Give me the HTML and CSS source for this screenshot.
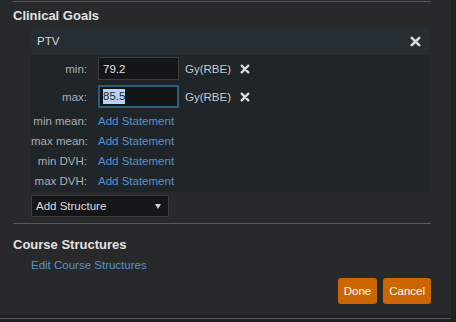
FILE: index.html
```html
<!DOCTYPE html>
<html>
<head>
    <title>Clinical Goals</title>
    <link rel="stylesheet" href="styles.css">
</head>
<body>
    <div class="dialog">
        <div class="rule"></div>
        <h2 class="section-title">Clinical Goals</h2>

        <div class="goal-panel">
            <div class="goal-header">
                <span>PTV</span>
                <svg class="close" width="11" height="11" viewBox="0 0 11 11">
                    <path d="M1.8 1.8 L9.2 9.2 M9.2 1.8 L1.8 9.2" stroke="#d8d8d8" stroke-width="2.6" stroke-linecap="round"/>
                </svg>
            </div>
            <div class="goal-body">
                <div class="input-row">
                    <span class="label">min:</span>
                    <div class="field">79.2</div>
                    <span class="unit">Gy(RBE)</span>
                    <svg class="remove" width="10" height="10" viewBox="0 0 10 10">
                        <path d="M1.7 1.7 L8.3 8.3 M8.3 1.7 L1.7 8.3" stroke="#d8d8d8" stroke-width="2.4" stroke-linecap="round"/>
                    </svg>
                </div>
                <div class="input-row">
                    <span class="label">max:</span>
                    <div class="field focused"><span class="selected">85.5</span></div>
                    <span class="unit">Gy(RBE)</span>
                    <svg class="remove" width="10" height="10" viewBox="0 0 10 10">
                        <path d="M1.7 1.7 L8.3 8.3 M8.3 1.7 L1.7 8.3" stroke="#d8d8d8" stroke-width="2.4" stroke-linecap="round"/>
                    </svg>
                </div>
                <div class="text-row"><span class="label">min mean:</span><a class="link">Add Statement</a></div>
                <div class="text-row"><span class="label">max mean:</span><a class="link">Add Statement</a></div>
                <div class="text-row"><span class="label">min DVH:</span><a class="link">Add Statement</a></div>
                <div class="text-row"><span class="label">max DVH:</span><a class="link">Add Statement</a></div>
            </div>
        </div>

        <div class="structure-select">
            <span>Add Structure</span>
            <span class="caret"></span>
        </div>

        <div class="rule separator"></div>
        <h2 class="section-title course">Course Structures</h2>
        <a class="link edit-link">Edit Course Structures</a>

        <div class="actions">
            <button class="btn">Done</button>
            <button class="btn">Cancel</button>
        </div>
    </div>
    <div class="footer-rule"></div>
</body>
</html>
```

FILE: styles.css
```css
body {
    margin: 0;
    width: 456px;
    height: 322px;
    overflow: hidden;
    background-color: #1f2022;
    font-family: "Liberation Sans", Arial, sans-serif;
    font-size: 11.5px;
    color: #dcdcdc;
}
.dialog {
    width: 451px;
    box-sizing: border-box;
    padding: 1px 20px 10px 13px;
    background-color: #28292b;
}
.rule {
    height: 1px;
    background-color: #5a5b5d;
}
.section-title {
    margin: 6px 0 4px;
    font-size: 13px;
    line-height: 15px;
    font-weight: bold;
    color: #e2e2e2;
}
.goal-panel {
    margin: 0 2px 0 18px;
    background-color: #1f2528;
}
.goal-header {
    height: 28px;
    display: flex;
    align-items: center;
    justify-content: space-between;
    padding: 0 8px 0 6px;
    background-color: #262d33;
    color: #d4d8dc;
}
.goal-body {
    padding: 2px 0 1px;
}
.input-row {
    display: flex;
    align-items: center;
    height: 23px;
    margin-bottom: 5px;
}
.input-row + .text-row {
    margin-top: -2px;
}
.label {
    width: 56px;
    margin-right: 11px;
    text-align: right;
    color: #aab0b6;
    white-space: nowrap;
}
.field {
    width: 81px;
    height: 23px;
    box-sizing: border-box;
    display: flex;
    align-items: center;
    padding-left: 4px;
    border: 1px solid #3a3d3f;
    background-color: #131517;
    color: #e0e0e0;
}
.field.focused {
    border: 2px solid #2b5f7d;
    padding-left: 3px;
}
.selected {
    background-color: #bcd2ee;
    color: #1b2733;
    line-height: 15px;
}
.unit {
    margin-left: 6px;
    color: #c2cad2;
}
.remove {
    margin-left: 9px;
}
.text-row {
    display: flex;
    height: 20px;
    line-height: 20px;
}
.link {
    color: #5a91cc;
    cursor: pointer;
}
.structure-select {
    width: 138px;
    height: 22px;
    box-sizing: border-box;
    margin: 3px 0 0 18px;
    padding: 0 7px 0 4px;
    display: flex;
    align-items: center;
    justify-content: space-between;
    border: 1px solid #3a3c3e;
    background-color: #141618;
    color: #dedede;
}
.caret {
    width: 0;
    height: 0;
    border-left: 3px solid transparent;
    border-right: 3px solid transparent;
    border-top: 5px solid #d0d0d0;
}
.separator {
    margin-top: 6px;
}
.section-title.course {
    margin: 13px 0 3px;
}
.edit-link {
    display: block;
    margin-left: 18px;
    line-height: 20px;
}
.actions {
    display: flex;
    justify-content: flex-end;
    gap: 6px;
    margin-top: 3px;
}
.btn {
    height: 26px;
    padding: 0 6px;
    border: none;
    border-radius: 3px;
    background-color: #cc6600;
    color: #fff;
    font-family: "Liberation Sans", Arial, sans-serif;
    font-size: 11.5px;
}
.footer-rule {
    width: 451px;
    height: 1px;
    margin-top: 4px;
    background-color: #58595b;
}
```
